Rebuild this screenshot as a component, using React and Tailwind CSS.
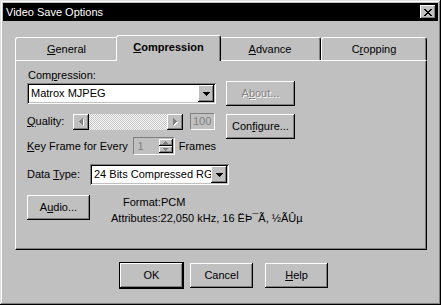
const raised = "shadow-[inset_-1px_-1px_0_#000,inset_1px_1px_0_#fff,inset_-2px_-2px_0_#808080]";
const sunken = "shadow-[inset_1px_1px_0_#808080,inset_-1px_-1px_0_#fff,inset_2px_2px_0_#000,inset_-2px_-2px_0_#c0c0c0]";
const disabledText = "text-[#808080] [text-shadow:1px_1px_0_#fff]";

function DownArrow({ color = "#000" }) {
  return (
    <svg width="7" height="4" shapeRendering="crispEdges">
      <path d="M0 0h7v1H0zM1 1h5v1H1zM2 2h3v1H2zM3 3h1v1H3z" fill={color} />
    </svg>
  );
}

function SideArrow({ dir }) {
  const d =
    dir === "left"
      ? "M3 0h1v7H3zM2 1h1v5H2zM1 2h1v3H1zM0 3h1v1H0z"
      : "M0 0h1v7H0zM1 1h1v5H1zM2 2h1v3H2zM3 3h1v1H3z";
  return (
    <svg width="5" height="8" shapeRendering="crispEdges">
      <path d={d} fill="#fff" transform="translate(1 1)" />
      <path d={d} fill="#808080" />
    </svg>
  );
}

function Combo({ value, className }) {
  return (
    <div className={`flex h-[21px] p-[2px] ${sunken} ${className}`}>
      <div className="flex-1 overflow-hidden whitespace-nowrap bg-white pl-[2px] leading-[17px]">{value}</div>
      <div className={`flex h-[17px] w-[16px] items-center justify-center bg-[#c0c0c0] ${raised}`}>
        <DownArrow />
      </div>
    </div>
  );
}

function Button({ children, className = "", disabled }) {
  return (
    <button
      className={`flex h-[25px] items-center justify-center bg-[#c0c0c0] ${raised} ${disabled ? disabledText : ""} ${className}`}
    >
      {children}
    </button>
  );
}

function Tab({ label, ul, rest, selected, className }) {
  return (
    <div
      className={`flex items-center justify-center rounded-t-[3px] border-l border-t border-r border-l-white border-t-white border-r-black bg-[#c0c0c0] shadow-[inset_-1px_0_0_#808080] ${
        selected ? "relative z-10 -mx-[2px] -mb-px h-[26px] pb-[2px] font-bold" : "h-[23px]"
      } ${className}`}
    >
      <span>
        {label}
        <u>{ul}</u>
        {rest}
      </span>
    </div>
  );
}

export default function App() {
  return (
    <div className="h-[305px] w-[441px] bg-[#c0c0c0] p-[3px] text-[11px] leading-[13px] text-black [font-family:'Liberation_Sans',Arial,sans-serif] shadow-[inset_-1px_-1px_0_#000,inset_1px_1px_0_#dfdfdf,inset_-2px_-2px_0_#808080,inset_2px_2px_0_#fff]">
      <div className="flex h-[18px] items-center justify-between bg-black pl-[3px] pr-[2px] text-white">
        <span>Video Save Options</span>
        <div className={`flex h-[14px] w-[16px] items-center justify-center bg-[#c0c0c0] ${raised}`}>
          <svg width="8" height="7" shapeRendering="crispEdges">
            <path
              d="M0 0h2v1H0zM6 0h2v1H6zM1 1h2v1H1zM5 1h2v1H5zM2 2h4v1H2zM3 3h2v1H3zM2 4h4v1H2zM1 5h2v1H1zM5 5h2v1H5zM0 6h2v1H0zM6 6h2v1H6z"
              fill="#000"
            />
          </svg>
        </div>
      </div>

      <div className="ml-[12px] mt-[14px] w-[412px]">
        <div className="flex h-[25px] items-end">
          <Tab ul="G" rest="eneral" className="w-[103px]" />
          <Tab ul="C" rest="ompression" selected className="w-[105px]" />
          <Tab ul="A" rest="dvance" className="w-[102px]" />
          <Tab label="C" ul="r" rest="opping" className="w-[106px]" />
        </div>

        <div className="h-[190px] border border-b-black border-l-white border-r-black border-t-white pl-[11px] pt-[8px] shadow-[inset_-1px_-1px_0_#808080]">
          <div className="flex">
            <div className="w-[189px]">
              <div className="ml-px">
                Com<u>p</u>ression:
              </div>
              <Combo value="Matrox MJPEG" className="mt-px w-[189px]" />

              <div className="mt-[9px] flex h-[17px] items-center">
                <span className="w-[46px]">
                  <u>Q</u>uality:
                </span>
                <div className="flex h-[16px] w-[110px]">
                  <div className={`flex h-[16px] w-[16px] items-center justify-center bg-[#c0c0c0] ${raised}`}>
                    <SideArrow dir="left" />
                  </div>
                  <div className="flex-1 [background:repeating-conic-gradient(#c0c0c0_0_25%,#ffffff_0_50%)_0_0/2px_2px]" />
                  <div className={`flex h-[16px] w-[16px] items-center justify-center bg-[#c0c0c0] ${raised}`}>
                    <SideArrow dir="right" />
                  </div>
                </div>
                <div className="ml-[7px] h-[17px] w-[25px] border border-b-white border-l-[#808080] border-r-white border-t-[#808080] pl-[2px] leading-[15px] text-[#808080]">
                  100
                </div>
              </div>

              <div className="mt-[7px] flex h-[18px] items-center">
                <span className="w-[108px]">
                  <u>K</u>ey Frame for Every
                </span>
                <div className="flex h-[18px] w-[43px] border border-b-white border-l-[#808080] border-r-white border-t-[#808080] p-px">
                  <div className="flex-1 pl-[3px] leading-[14px] text-[#808080]">1</div>
                  <div className="flex w-[14px] flex-col">
                    <div className={`flex h-[7px] items-center justify-center bg-[#c0c0c0] ${raised}`}>
                      <svg width="5" height="3" shapeRendering="crispEdges">
                        <path d="M2 0h1v1H2zM1 1h3v1H1zM0 2h5v1H0z" fill="#808080" />
                      </svg>
                    </div>
                    <div className={`flex h-[7px] items-center justify-center bg-[#c0c0c0] ${raised}`}>
                      <svg width="5" height="3" shapeRendering="crispEdges">
                        <path d="M0 0h5v1H0zM1 1h3v1H1zM2 2h1v1H2z" fill="#808080" />
                      </svg>
                    </div>
                  </div>
                </div>
                <span className="ml-[4px]">Frames</span>
              </div>
            </div>

            <div className="ml-[10px] flex flex-col pt-[12px]">
              <Button disabled className="w-[69px]">
                <span>
                  A<u>b</u>out...
                </span>
              </Button>
              <Button className="mt-[8px] w-[69px]">
                <span>
                  Con<u>f</u>igure...
                </span>
              </Button>
            </div>
          </div>

          <div className="mt-[9px] flex h-[21px] items-center">
            <span className="w-[63px]">
              Data <u>T</u>ype:
            </span>
            <Combo value="24 Bits Compressed RGB" className="w-[139px]" />
          </div>

          <div className="mt-[10px] flex">
            <Button className="w-[63px]">
              <span>
                A<u>u</u>dio...
              </span>
            </Button>
            <div className="ml-[21px] pt-[1px]">
              <div className="ml-[12px]">Format:PCM</div>
              <div className="mt-[3px]">Attributes:22,050 kHz, 16 ËÞ¯Ã, ½ÃÛµ</div>
            </div>
          </div>
        </div>
      </div>

      <div className="ml-[117px] mt-[13px] flex">
        <Button className="w-[63px] outline outline-1 outline-black">OK</Button>
        <Button className="ml-[7px] w-[63px]">Cancel</Button>
        <Button className="ml-[12px] w-[63px]">
          <span>
            <u>H</u>elp
          </span>
        </Button>
      </div>
    </div>
  );
}
